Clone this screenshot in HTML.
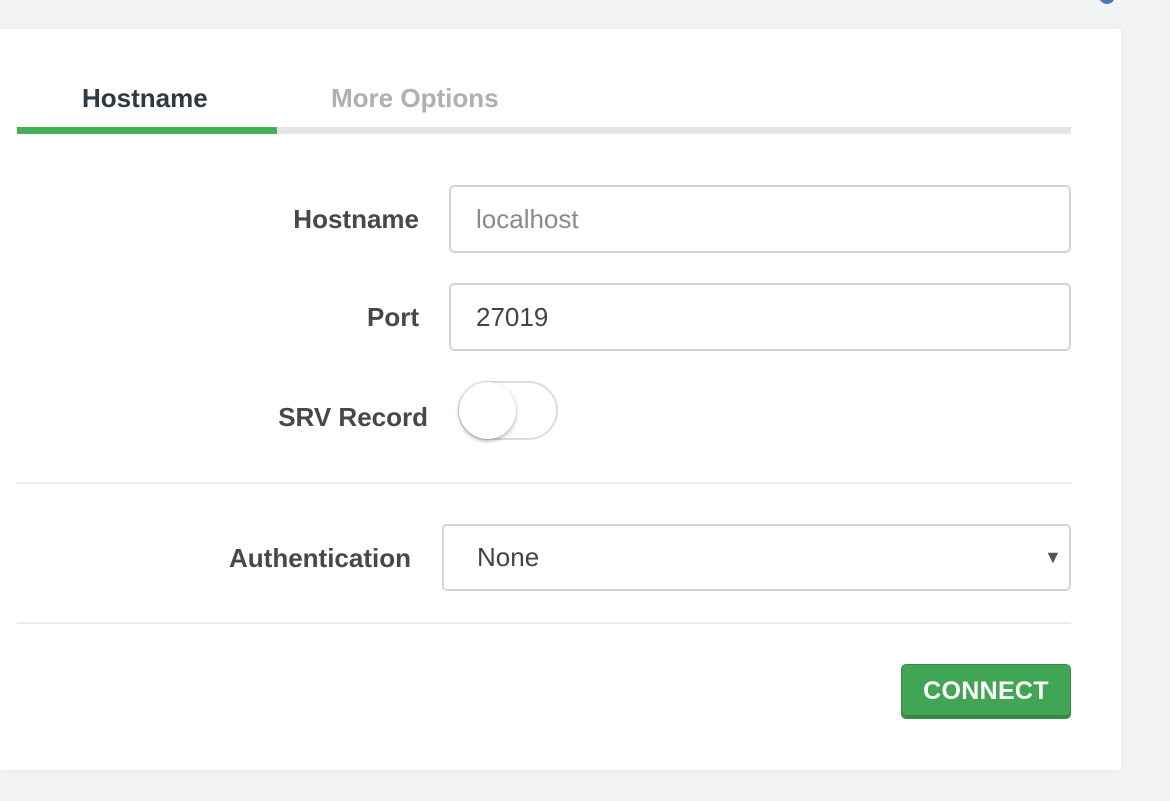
<!DOCTYPE html>
<html><head><style>
body{margin:0;width:1170px;height:801px;background:#f3f4f6;font-family:"Liberation Sans",sans-serif;position:relative;overflow:hidden}
.card{position:absolute;left:0;top:29px;width:1121px;height:741px;background:#fff;box-shadow:0 0 8px rgba(0,0,0,.06)}
.abs{position:absolute}
.lbl{position:absolute;font-weight:bold;font-size:26px;color:#494747;text-align:right}
.inp{position:absolute;border:2px solid #d5d5d5;border-radius:5px;box-sizing:border-box;font-size:26px;padding-left:25px;display:flex;align-items:center}
</style></head><body>
<div class="abs" style="left:1099px;top:-12px;width:16px;height:16px;border:4px solid #4a78c0;border-radius:50%;box-sizing:border-box"></div>
<div class="card">
<div class="abs" style="left:82px;top:54px;font-size:26px;font-weight:bold;color:#2c3a44">Hostname</div>
<div class="abs" style="left:331px;top:54px;font-size:26px;font-weight:bold;color:#b0b0b0">More Options</div>
<div class="abs" style="left:17px;top:98px;width:1054px;height:7px;background:#e4e4e4"></div>
<div class="abs" style="left:17px;top:98px;width:260px;height:7px;background:#43b15a"></div>
<div class="lbl" style="right:702px;top:175px">Hostname</div>
<div class="inp" style="left:449px;top:156px;width:622px;height:68px;color:#8a8a8a">localhost</div>
<div class="lbl" style="right:702px;top:273px">Port</div>
<div class="inp" style="left:449px;top:254px;width:622px;height:68px;color:#444">27019</div>
<div class="lbl" style="right:693px;top:373px">SRV Record</div>
<div class="abs" style="left:458px;top:352px;width:100px;height:59px;border:2px solid #dcdcdc;border-radius:30px;box-sizing:border-box"></div>
<div class="abs" style="left:459px;top:353px;width:57px;height:57px;border-radius:50%;background:#fff;box-shadow:0 2px 4px rgba(0,0,0,.3)"></div>
<div class="abs" style="left:17px;top:453px;width:1054px;height:2px;background:#ececec"></div>
<div class="lbl" style="right:710px;top:514px">Authentication</div>
<div class="inp" style="left:442px;top:495px;width:629px;height:67px;color:#444;padding-left:33px">None</div>
<div class="abs" style="left:1044px;top:518px;font-size:18px;color:#555">▼</div>
<div class="abs" style="left:17px;top:593px;width:1054px;height:2px;background:#ececec"></div>
<div class="abs" style="left:901px;top:635px;width:170px;height:55px;background:#41a653;border:1px solid #3a8a48;border-radius:5px;box-sizing:border-box;box-shadow:inset 0 -3px 0 #378845;color:#fff;font-weight:bold;font-size:25px;letter-spacing:0.3px;display:flex;align-items:center;justify-content:center">CONNECT</div>
</div>
</body></html>
